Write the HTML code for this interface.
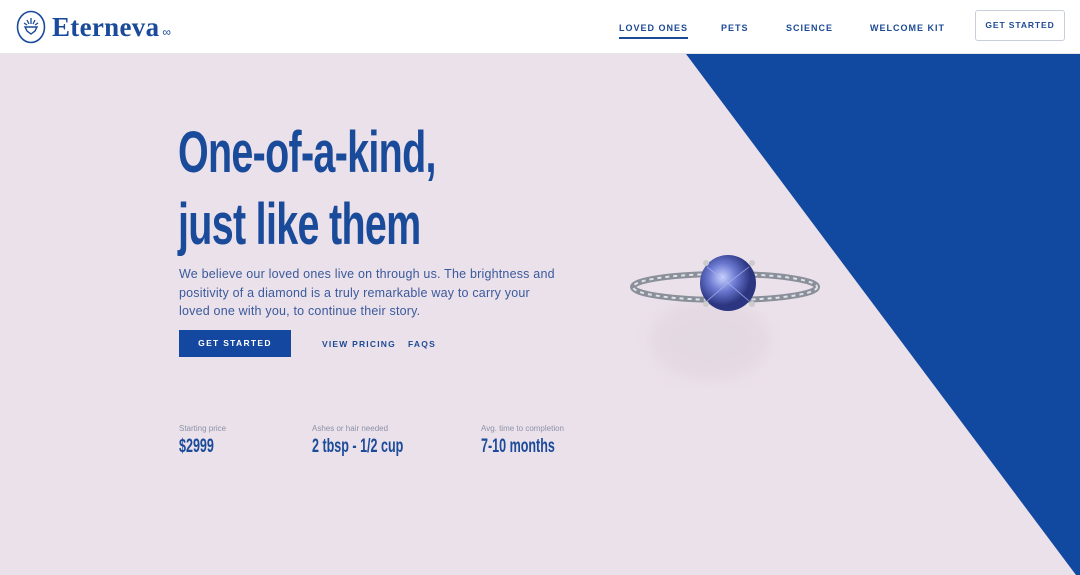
<!DOCTYPE html>
<html><head><meta charset="utf-8"><style>
*{margin:0;padding:0;box-sizing:border-box}
body{width:1080px;height:575px;overflow:hidden;font-family:"Liberation Sans",sans-serif;background:#ebe1ea;position:relative}
.hdr{position:absolute;left:0;top:0;width:1080px;height:54px;background:#fff;border-bottom:1px solid #e6e6e6}
.logo{position:absolute;left:16px;top:10px;display:flex;align-items:center}
.logo .t{font-family:"Liberation Serif",serif;font-weight:bold;font-size:27px;color:#1a4a9a;margin-left:6px;letter-spacing:0.3px}
.logo .inf{font-size:12px;color:#1a4a9a;margin-left:3px;margin-top:10px}
.nav a{position:absolute;top:23px;font-size:9px;font-weight:bold;letter-spacing:1px;color:#1d4a94;text-decoration:none}
.btn1{position:absolute;left:975px;top:10px;width:90px;height:31px;border:1px solid #c8cfdb;border-radius:3px;font-size:8.5px;font-weight:bold;letter-spacing:0.9px;color:#1d4a94;text-align:center;line-height:29px}
.h1{position:absolute;left:178px;top:117px;font-family:"Liberation Sans Narrow","Liberation Sans",sans-serif;font-weight:bold;font-size:58px;line-height:72px;color:#1a4a9a;transform:scaleX(0.68);transform-origin:left top;white-space:nowrap;letter-spacing:-1px}
.p{position:absolute;left:179px;top:265px;width:378px;font-size:12.5px;line-height:18.5px;color:#3a5a9c;letter-spacing:0.2px}
.cta{position:absolute;left:179px;top:330px;width:112px;height:27px;background:#1448a0;color:#fff;font-size:8.5px;font-weight:bold;letter-spacing:1.3px;text-align:center;line-height:27px}
.lk{position:absolute;top:339px;font-size:8.5px;font-weight:bold;letter-spacing:1.2px;color:#1d4a94}
.sl{position:absolute;top:424px;font-size:8px;color:#8d92a8}
.sv{position:absolute;top:436px;font-family:"Liberation Sans Narrow","Liberation Sans",sans-serif;font-weight:bold;font-size:19px;color:#1a4a9a;transform:scaleX(0.66);transform-origin:left top;white-space:nowrap}
</style></head><body>
<svg style="position:absolute;left:0;top:0" width="1080" height="575"><polygon points="686,54 1080,54 1080,575 1076,575" fill="#1249a0"/></svg>
<div class="hdr">
<div class="logo"><svg width="30" height="34" viewBox="0 0 30 34"><ellipse cx="15" cy="17" rx="13.5" ry="15.5" fill="none" stroke="#1a4a9a" stroke-width="1.6"/><path d="M9 17h12l-2 4-4 3-4-3z" fill="none" stroke="#1a4a9a" stroke-width="1.4"/><path d="M15 8v6M11 10l2 4M19 10l-2 4M8 13l3 2M22 13l-3 2" stroke="#1a4a9a" stroke-width="1.3"/></svg><span class="t">Eterneva</span><span class="inf">∞</span></div>
<div class="nav"><a style="left:619px;border-bottom:2px solid #1d4a94;padding-bottom:4px">LOVED ONES</a><a style="left:721px">PETS</a><a style="left:786px">SCIENCE</a><a style="left:870px">WELCOME KIT</a></div>
<div class="btn1">GET STARTED</div>
</div>
<div class="h1">One-of-a-kind,<br>just like them</div>
<div class="p">We believe our loved ones live on through us. The brightness and positivity of a diamond is a truly remarkable way to carry your loved one with you, to continue their story.</div>
<div class="cta">GET STARTED</div>
<div class="lk" style="left:322px">VIEW PRICING</div>
<div class="lk" style="left:408px">FAQS</div>
<div class="sl" style="left:179px">Starting price</div><div class="sv" style="left:179px">$2999</div>
<div class="sl" style="left:312px">Ashes or hair needed</div><div class="sv" style="left:312px">2 tbsp - 1/2 cup</div>
<div class="sl" style="left:481px">Avg. time to completion</div><div class="sv" style="left:481px">7-10 months</div>
<svg style="position:absolute;left:620px;top:245px" width="210" height="170" viewBox="0 0 210 170">
<defs><radialGradient id="g" cx="0.4" cy="0.4"><stop offset="0" stop-color="#c9d2ff"/><stop offset="0.5" stop-color="#6a78d0"/><stop offset="1" stop-color="#2b3580"/></radialGradient><filter id="b"><feGaussianBlur stdDeviation="8"/></filter></defs>
<ellipse cx="90" cy="95" rx="60" ry="40" fill="#ddd2dc" filter="url(#b)" opacity="0.5"/>
<ellipse cx="105" cy="42" rx="92" ry="13" fill="none" stroke="#8a8f9a" stroke-width="6"/>
<ellipse cx="105" cy="42" rx="92" ry="13" fill="none" stroke="#dfe2e8" stroke-width="2" stroke-dasharray="4 4"/>
<circle cx="108" cy="38" r="28" fill="url(#g)"/>
<path d="M87 22l21 16 21-16M87 56l21-18 21 18" stroke="#aab4f0" stroke-width="1" fill="none" opacity="0.7"/>
<circle cx="86" cy="18" r="3" fill="#ccc"/><circle cx="132" cy="18" r="3" fill="#ccc"/><circle cx="86" cy="59" r="3" fill="#ccc"/><circle cx="132" cy="59" r="3" fill="#ccc"/>
</svg>
</body></html>
